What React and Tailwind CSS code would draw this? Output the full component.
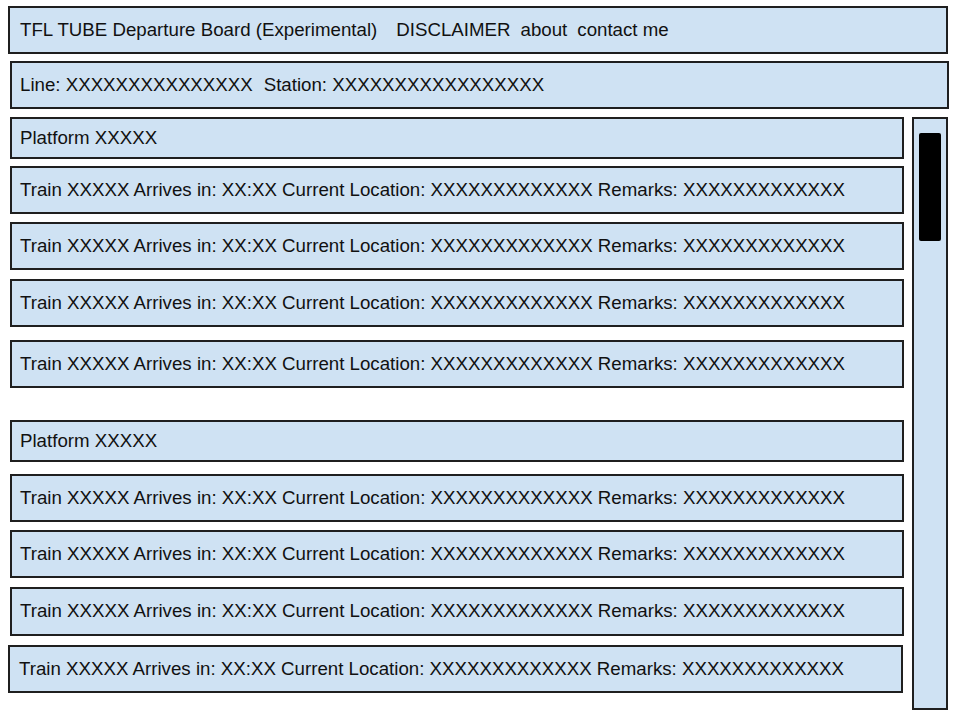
const rows = [
  { kind: 'platform', cls: 'mt-0 h-[42px] ml-0 w-[894px] pl-[8px]' },
  { kind: 'train', cls: 'mt-[7px] h-[48px] ml-0 w-[894px] pl-[8px]' },
  { kind: 'train', cls: 'mt-[8px] h-[48px] ml-0 w-[894px] pl-[8px]' },
  { kind: 'train', cls: 'mt-[9px] h-[48px] ml-0 w-[894px] pl-[8px]' },
  { kind: 'train', cls: 'mt-[13px] h-[48px] ml-0 w-[894px] pl-[8px]' },
  { kind: 'platform', cls: 'mt-[32px] h-[42px] ml-0 w-[894px] pl-[8px]' },
  { kind: 'train', cls: 'mt-[12px] h-[48px] ml-0 w-[894px] pl-[8px]' },
  { kind: 'train', cls: 'mt-[8px] h-[48px] ml-0 w-[894px] pl-[8px]' },
  { kind: 'train', cls: 'mt-[9px] h-[49px] ml-0 w-[894px] pl-[8px]' },
  { kind: 'train', cls: 'mt-[9px] h-[48px] -ml-[2px] w-[895px] pl-[9px]' },
];

const box = 'flex items-center border-2 border-[#1f1f1f] bg-[#cfe2f3]';

function Row({ kind, cls }) {
  return (
    <div className={`${box} ${cls}`}>
      {kind === 'platform' ? (
        <span>Platform XXXXX</span>
      ) : (
        <span className="whitespace-nowrap">
          Train XXXXX Arrives in: XX:XX Current Location: XXXXXXXXXXXXX Remarks: XXXXXXXXXXXXX
        </span>
      )}
    </div>
  );
}

export default function App() {
  return (
    <div
      className="w-[960px] h-[720px] bg-white text-[18.7px] text-[#111] overflow-hidden pt-[6px]"
      style={{ fontFamily: '"Liberation Sans", Arial, sans-serif' }}
    >
      {/* Top bar */}
      <div className={`${box} ml-[8px] w-[940px] h-[48px] pl-[10px]`}>
        <span>TFL TUBE Departure Board (Experimental)</span>
        <span className="ml-[19px]">DISCLAIMER</span>
        <span className="ml-[10px]">about</span>
        <span className="ml-[10px]">contact me</span>
      </div>

      {/* Line / station */}
      <div className={`${box} mt-[7px] ml-[10px] w-[939px] h-[48px] pl-[8px]`}>
        <span>Line: XXXXXXXXXXXXXXX</span>
        <span className="ml-[11px]">Station: XXXXXXXXXXXXXXXXX</span>
      </div>

      <div className="flex mt-[8px] ml-[10px] gap-[8px]">
        <div className="flex flex-col">
          {rows.map((r, i) => (
            <Row key={i} {...r} />
          ))}
        </div>

        {/* Scrollbar */}
        <div className="w-[36px] h-[593px] border-2 border-[#1f1f1f] bg-[#cfe2f3] pt-[14px] pl-[5px]">
          <div className="w-[22px] h-[108px] bg-black rounded-[2px]" />
        </div>
      </div>
    </div>
  );
}
